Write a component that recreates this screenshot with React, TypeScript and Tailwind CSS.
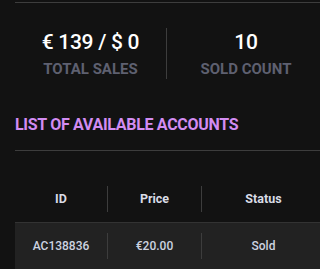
export default function App() {
  return (
    <div className="h-[269px] w-[320px] overflow-hidden bg-[#121212] font-['Roboto',sans-serif]">
      <div className="ml-[15px] w-[310px] pt-[2px]">
        <div className="h-px bg-[#3d3d3d]" />

        <div className="mt-[25px] flex items-center">
          <div className="flex w-[151px] flex-col items-center">
            <p className="text-[21px] font-medium leading-[24px] tracking-[-0.3px] text-white">€ 139 / $ 0</p>
            <p className="mt-[6px] text-[15px] font-bold leading-[18px] text-[#5e6070]">TOTAL SALES</p>
          </div>
          <div className="h-[51px] w-px bg-[#3d3d3d]" />
          <div className="flex flex-1 flex-col items-center">
            <p className="text-[21px] font-medium leading-[24px] tracking-[-0.3px] text-white">10</p>
            <p className="mt-[6px] text-[15px] font-bold leading-[18px] text-[#5e6070]">SOLD COUNT</p>
          </div>
        </div>

        <h2 className="mt-[36px] text-[16px] font-bold leading-[20px] tracking-[-0.3px] text-[#d28cf2]">
          LIST OF AVAILABLE ACCOUNTS
        </h2>
        <div className="mt-[15px] h-px bg-[#3d3d3d]" />

        <div className="mt-[35px] grid h-[26px] grid-cols-[92px_94px_1fr] items-center text-[12.5px] font-bold text-[#d9dce6]">
          <div className="text-center">ID</div>
          <div className="flex h-full items-center justify-center border-l border-[#3d3d3d]">Price</div>
          <div className="flex h-full items-center justify-center border-l border-[#3d3d3d]">Status</div>
        </div>

        <div className="mt-[10px] border-t border-[#333] bg-[#222222] pt-[10px] pb-[11px]">
          <div className="grid h-[26px] grid-cols-[92px_94px_1fr] items-center text-[12px] font-medium text-[#cdd3e0]">
            <div className="text-center">AC138836</div>
            <div className="flex h-full items-center justify-center border-l border-[#3d3d3d]">€20.00</div>
            <div className="flex h-full items-center justify-center border-l border-[#3d3d3d]">Sold</div>
          </div>
        </div>
      </div>
    </div>
  );
}
